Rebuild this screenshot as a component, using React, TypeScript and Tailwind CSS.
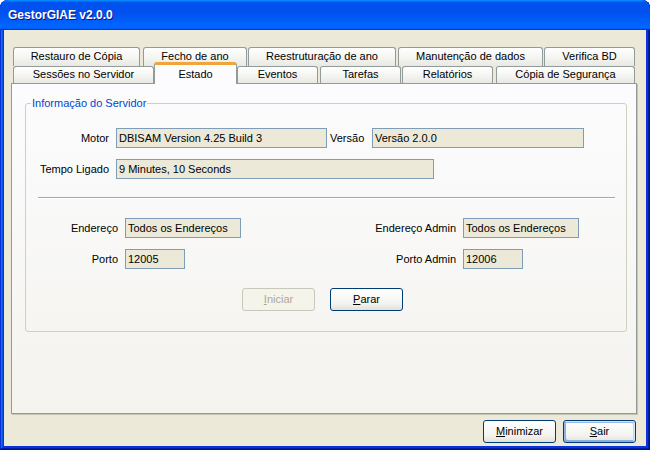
import React from 'react';

const font = "font-['Liberation_Sans',Arial,sans-serif]";

type Tab = { label: string; w: string; ml?: string; active?: boolean };

const backRow: Tab[] = [
  { label: 'Restauro de Cópia', w: 'w-[127px]' },
  { label: 'Fecho de ano', w: 'w-[104px]', ml: 'ml-[3px]' },
  { label: 'Reestruturação de ano', w: 'w-[148px]', ml: 'ml-[1px]' },
  { label: 'Manutenção de dados', w: 'w-[145px]', ml: 'ml-[2px]' },
  { label: 'Verifica BD', w: 'w-[91px]', ml: 'ml-[1px]' },
];

const frontRow: Tab[] = [
  { label: 'Sessões no Servidor', w: 'w-[141px]' },
  { label: 'Estado', w: 'w-[83px]', active: true },
  { label: 'Eventos', w: 'w-[81px]' },
  { label: 'Tarefas', w: 'w-[81px]', ml: 'ml-[2px]' },
  { label: 'Relatórios', w: 'w-[91px]', ml: 'ml-[1px]' },
  { label: 'Cópia de Segurança', w: 'w-[139px]', ml: 'ml-[3px]' },
];

const TabButton: React.FC<{ tab: Tab; h: string }> = ({ tab, h }) => {
  if (tab.active) {
    return (
      <div
        className={`${tab.w} h-[22px] -mb-px relative z-10 flex items-start justify-center pt-[1px] rounded-t-[3px] border-x border-[#919B9C] border-t-[3px] border-t-[#F1A43A] bg-[#FCFCFE] text-[11px] text-black`}
      >
        {tab.label}
      </div>
    );
  }
  return (
    <div
      className={`${tab.w} ${tab.ml ?? ''} ${h} flex items-center justify-center pb-px rounded-t-[3px] border border-b-0 border-[#919B9C] bg-[linear-gradient(180deg,#FFFFFF,#F3F3EF_60%,#E9E8E2)] text-[11px] text-black`}
    >
      {tab.label}
    </div>
  );
};

const Field: React.FC<{ value: string; w: string }> = ({ value, w }) => (
  <div className={`${w} h-[20px] border border-[#7F9DB9] bg-[#ECE9D8] pl-[2px] flex items-center text-[11px] text-black whitespace-nowrap overflow-hidden`}>
    {value}
  </div>
);

const Label: React.FC<{ w: string; children: React.ReactNode }> = ({ w, children }) => (
  <span className={`${w} text-right text-[11px] text-black shrink-0`}>{children}</span>
);

const XpButton: React.FC<{ label: string; w?: string; disabled?: boolean; isDefault?: boolean; className?: string }> = ({
  label,
  w = 'w-[73px]',
  disabled,
  isDefault,
  className = '',
}) => {
  const base = `${w} h-[23px] rounded-[3px] border flex items-center justify-center text-[11px] ${className}`;
  if (disabled) {
    return (
      <div className={`${base} border-[#C9C7BA] bg-[#F5F4EA] text-[#ACA899]`}>
        <u>{label[0]}</u>
        {label.slice(1)}
      </div>
    );
  }
  return (
    <div
      className={`${base} border-[#003C74] text-black bg-[linear-gradient(180deg,#FFFFFF,#F3F3EF_70%,#E3E1D7)] ${
        isDefault
          ? 'shadow-[inset_-1px_1px_#cee7ff,inset_1px_2px_#98b8ea,inset_-2px_2px_#bcd4f6,inset_1px_-1px_#89ade4,inset_2px_-2px_#89ade4]'
          : ''
      }`}
    >
      <u>{label[0]}</u>
      {label.slice(1)}
    </div>
  );
};

export default function App() {
  return (
    <div
      className={`${font} w-[650px] h-[450px] flex flex-col rounded-t-[8px] bg-[#0831D9] shadow-[inset_-1px_-1px_#00138c,inset_1px_1px_#0831d9,inset_-2px_-2px_#001ea0,inset_2px_2px_#166aee,inset_-3px_-3px_#003bda,inset_3px_3px_#0855dd] overflow-hidden`}
    >
      {/* title bar */}
      <div className="h-[30px] shrink-0 flex items-center pl-[8px] rounded-t-[8px] bg-[linear-gradient(180deg,#0997ff,#0053ee_8%,#0050ee_40%,#06f_88%,#06f_93%,#005bff_95%,#003dd7_96%,#003dd7)]">
        <span className="text-white font-bold text-[12px] [text-shadow:1px_1px_#0F1089]">GestorGIAE v2.0.0</span>
      </div>

      {/* client area */}
      <div className="flex-1 mx-[4px] mb-[4px] bg-[#ECE9D8] flex flex-col pl-[7px] pr-[9px] pt-[17px]">
        {/* tabs */}
        <div className="ml-[2px] flex flex-col">
          <div className="flex h-[19px]">
            {backRow.map((t) => (
              <TabButton key={t.label} tab={t} h="h-[19px]" />
            ))}
          </div>
          <div className="flex h-[17px] items-end">
            {frontRow.map((t) => (
              <TabButton key={t.label} tab={t} h="h-[17px]" />
            ))}
          </div>
        </div>

        {/* tab page */}
        <div className="w-[626px] h-[331px] border border-[#919B9C] shadow-[1px_1px_#C5C2B2] bg-[linear-gradient(180deg,#FCFCFE,#F4F3EE)] pt-[19px] pl-[13px]">
          <div className="relative w-[602px] h-[229px] rounded-[3px] border border-[#D0D0BF] flex flex-col">
            <span className="absolute -top-[8px] left-[5px] px-[1px] bg-[#FBFBFA] text-[11px] text-[#0046D5] leading-[14px]">
              Informação do Servidor
            </span>

            <div className="mt-[24px] flex items-center">
              <Label w="w-[83px]">Motor</Label>
              <div className="ml-[7px]">
                <Field value="DBISAM Version 4.25 Build 3" w="w-[211px]" />
              </div>
              <span className="w-[45px] pl-[3px] text-[11px] text-black">Versão</span>
              <Field value="Versão 2.0.0" w="w-[212px]" />
            </div>

            <div className="mt-[11px] flex items-center">
              <Label w="w-[83px]">Tempo Ligado</Label>
              <div className="ml-[7px]">
                <Field value="9 Minutes, 10 Seconds" w="w-[318px]" />
              </div>
            </div>

            <div className="mt-[18px] ml-[12px] w-[577px] h-[2px] border-t border-[#ACA899] border-b border-b-white" />

            <div className="mt-[19px] flex items-center">
              <div className="w-[215px] flex items-center">
                <Label w="w-[92px]">Endereço</Label>
                <div className="ml-[7px]">
                  <Field value="Todos os Endereços" w="w-[116px]" />
                </div>
              </div>
              <Label w="w-[215px]">Endereço Admin</Label>
              <div className="ml-[7px]">
                <Field value="Todos os Endereços" w="w-[116px]" />
              </div>
            </div>

            <div className="mt-[11px] flex items-center">
              <div className="w-[215px] flex items-center">
                <Label w="w-[92px]">Porto</Label>
                <div className="ml-[7px]">
                  <Field value="12005" w="w-[60px]" />
                </div>
              </div>
              <Label w="w-[215px]">Porto Admin</Label>
              <div className="ml-[7px]">
                <Field value="12006" w="w-[60px]" />
              </div>
            </div>

            <div className="mt-[19px] ml-[216px] flex">
              <XpButton label="Iniciar" disabled />
              <XpButton label="Parar" className="ml-[15px]" />
            </div>
          </div>
        </div>

        {/* bottom buttons */}
        <div className="mt-[6px] flex justify-end gap-[7px] pr-[1px]">
          <XpButton label="Minimizar" />
          <XpButton label="Sair" isDefault />
        </div>
      </div>
    </div>
  );
}
